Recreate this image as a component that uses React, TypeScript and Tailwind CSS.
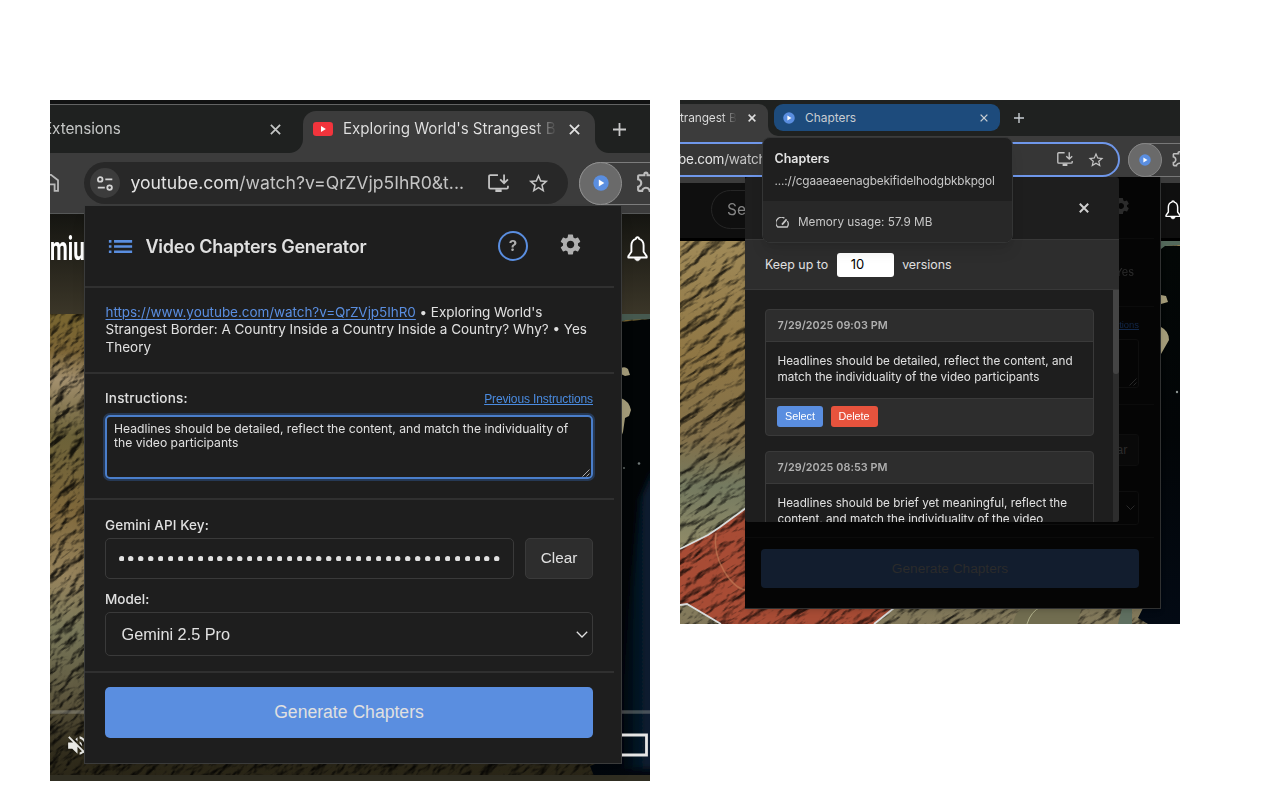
import React from "react";
import {
  MdList,
  MdSettings,
  MdStarBorder,
  MdVolumeOff,
  MdOutlineExtension,
} from "react-icons/md";

const sf = "font-['Inter','Noto_Sans',sans-serif]";
const arial = "font-['Liberation_Sans',Arial,sans-serif]";

const leftTitle = "Exploring World's Strangest B";
const dots = Array.from({ length: 39 }, (_, i) => i);

function Cross({ size, weight = 2 }: { size: number; weight?: number }) {
  return (
    <svg width={size} height={size} viewBox="0 0 10 10" className="shrink-0" fill="none" stroke="currentColor" strokeWidth={weight}>
      <path d="M0.8 0.8 9.2 9.2M9.2 0.8 0.8 9.2" />
    </svg>
  );
}

function Plus({ size }: { size: number }) {
  return (
    <svg width={size} height={size} viewBox="0 0 13 13" className="shrink-0" fill="none" stroke="currentColor" strokeWidth={1.8}>
      <path d="M6.5 0v13M0 6.5h13" />
    </svg>
  );
}

function PlayBadge({ size }: { size: number }) {
  return (
    <svg width={size} height={size} viewBox="0 0 16 16" className="shrink-0">
      <circle cx="8" cy="8" r="7.7" fill="#5a8ee0" />
      <path d="M5.8 4.6v6.8L11.3 8z" fill="#fff" />
    </svg>
  );
}

function Bell({ width }: { width: number }) {
  return (
    <svg width={width} height={(width * 26) / 21} viewBox="0 0 21 26" className="shrink-0" fill="none" stroke="currentColor" strokeWidth={1.9} strokeLinejoin="round">
      <path d="M10.5 1.2c-.9 0-1.5.7-1.5 1.6C6 3.6 4.4 6.2 4.4 9.6v6.2L1.3 20.2v1.3h18.4v-1.3L16.6 15.8V9.6c0-3.400-1.600-6-4.600-6.800 0-.9-.6-1.600-1.500-1.600z" />
      <path d="M7.6 22.3c.3 1.6 1.500 2.500 2.900 2.500s2.600-.9 2.900-2.500z" fill="currentColor" strokeWidth={0.6} />
    </svg>
  );
}

function InstallIcon({ width }: { width: number }) {
  return (
    <svg width={width} height={(width * 18) / 20} viewBox="0 0 20 18" className="shrink-0" fill="none" stroke="currentColor" strokeWidth={1.7}>
      <path d="M9.5 1H2.2Q1 1 1 2.2v10.6Q1 14 2.2 14h15.6q1.2 0 1.2-1.2v-1.6" />
      <path d="M7 16h6" strokeWidth={3} />
      <path d="M15.3 0.4v8M11.6 5.2l3.7 3.6 3.7-3.6" />
    </svg>
  );
}

function TuneIcon() {
  return (
    <svg width="16" height="15" viewBox="0 0 16 15" fill="none" stroke="currentColor" strokeWidth={1.8}>
      <circle cx="3.2" cy="3.4" r="2.3" />
      <path d="M8.3 3.4h7M0.8 11.6h7" />
      <circle cx="12.6" cy="11.6" r="2.3" />
    </svg>
  );
}

function Chevron({ width }: { width: number }) {
  return (
    <svg width={width} height={(width * 7) / 12} viewBox="0 0 12 7" className="shrink-0" fill="none" stroke="currentColor" strokeWidth={1.3}>
      <path d="M0.8 0.8 6 6l5.2-5.2" />
    </svg>
  );
}

function ResizeGrip() {
  return (
    <svg width="8" height="8" viewBox="0 0 8 8" stroke="currentColor" strokeWidth={0.9}>
      <path d="M0.5 7.5 7.5 0.5M4.5 7.5l3-3" />
    </svg>
  );
}

function LeftMap() {
  return (
    <svg width="600" height="467" viewBox="0 0 600 467" className="block">
      <defs>
        <filter id="ridgesA" x="0" y="0" width="100%" height="100%" colorInterpolationFilters="sRGB">
          <feTurbulence type="fractalNoise" baseFrequency="0.05 0.1" numOctaves="5" seed="7" />
          <feColorMatrix values="0 0 0 0 0  0 0 0 0 0  0 0 0 0 0  1 0.6 0 0 -0.2" />
          <feDiffuseLighting surfaceScale="6" diffuseConstant="1.2" lightingColor="#ffffff">
            <feDistantLight azimuth="250" elevation="50" />
          </feDiffuseLighting>
        </filter>
        <linearGradient id="landA" x1="0" y1="0" x2="0" y2="1">
          <stop offset="0" stopColor="#78652f" />
          <stop offset="0.08" stopColor="#7c6536" />
          <stop offset="0.14" stopColor="#a3906e" />
          <stop offset="0.26" stopColor="#6b6138" />
          <stop offset="0.42" stopColor="#7f683b" />
          <stop offset="0.56" stopColor="#96835c" />
          <stop offset="0.68" stopColor="#787759" />
          <stop offset="0.84" stopColor="#59523a" />
          <stop offset="0.92" stopColor="#35301f" />
          <stop offset="1" stopColor="#292516" />
        </linearGradient>
        <linearGradient id="seaA" x1="0" y1="0" x2="0" y2="1">
          <stop offset="0" stopColor="#020506" />
          <stop offset="0.35" stopColor="#020506" />
          <stop offset="0.7" stopColor="#020509" />
          <stop offset="1" stopColor="#02070d" />
        </linearGradient>
        <linearGradient id="glowA" x1="0" y1="0" x2="1" y2="0">
          <stop offset="0" stopColor="#0a2138" stopOpacity="0" />
          <stop offset="1" stopColor="#0a2138" />
        </linearGradient>
        <filter id="softA">
          <feGaussianBlur stdDeviation="3" />
        </filter>
      </defs>
      <rect width="600" height="467" fill="url(#landA)" />
      <g className="mix-blend-multiply" opacity="0.8">
        <rect x="-400" y="-100" width="1000" height="900" transform="rotate(-38)" filter="url(#ridgesA)" />
      </g>
      <path d="M600 5 570 8V440l-30 12 6 15h54z" fill="url(#seaA)" />
      <path d="M590 185l14-30v300h-34v-60z" fill="url(#glowA)" filter="url(#softA)" />
      <path d="M570 0h30v5l-24 1-6 2z" fill="#46594f" />
      <path d="M571 54q4-2 7 1l2 6-5 1-4-2zM571 84q8 3 10 12l-2 6-4 2-2 14-2 5z" fill="#a39b79" />
      <circle cx="589" cy="149.500" r="1.300" fill="#727a78" />
      <circle cx="574" cy="154" r="1" fill="#5c6462" />
      <path d="M0 398h600" stroke="#a3a29c" strokeOpacity="0.4" strokeWidth="3.5" />
      <rect y="461" width="600" height="6" fill="#302e22" />
      <path d="M560 421h36.5v20H560" fill="none" stroke="#e6e6e6" strokeWidth="2.8" />
    </svg>
  );
}

function RightMap() {
  return (
    <svg width="500" height="383" viewBox="0 0 500 383" className="block">
      <defs>
        <filter id="ridgesB" x="0" y="0" width="100%" height="100%" colorInterpolationFilters="sRGB">
          <feTurbulence type="fractalNoise" baseFrequency="0.035 0.09" numOctaves="5" seed="11" />
          <feColorMatrix values="0 0 0 0 0  0 0 0 0 0  0 0 0 0 0  1 0.6 0 0 -0.2" />
          <feDiffuseLighting surfaceScale="6" diffuseConstant="1.25" lightingColor="#ffffff">
            <feDistantLight azimuth="250" elevation="52" />
          </feDiffuseLighting>
        </filter>
        <linearGradient id="landB" x1="0" y1="0" x2="0" y2="1">
          <stop offset="0" stopColor="#a08a58" />
          <stop offset="0.3" stopColor="#8f7644" />
          <stop offset="0.52" stopColor="#82704a" />
          <stop offset="0.64" stopColor="#747a60" />
          <stop offset="0.78" stopColor="#8d8967" />
          <stop offset="1" stopColor="#82785a" />
        </linearGradient>
        <linearGradient id="seaB" x1="0" y1="0" x2="0" y2="1">
          <stop offset="0" stopColor="#030706" />
          <stop offset="0.5" stopColor="#020507" />
          <stop offset="1" stopColor="#030a14" />
        </linearGradient>
      </defs>
      <rect width="500" height="383" fill="url(#landB)" />
      <path d="M0 308 28 294 40 286 66 267H250L213 368 195 383H40L7 363 0 364z" fill="#a84c35" />
      <g className="mix-blend-multiply" opacity="0.75">
        <rect x="-400" y="-100" width="1000" height="800" transform="rotate(-32)" filter="url(#ridgesB)" />
      </g>
      <path d="M0 308 28 294 40 286 66 267M0 364l7-1 34 20M194 383l20-16" fill="none" stroke="#d9dcdc" strokeWidth="1.8" />
      <path d="M36 292q-3 20 8 38t22 19" fill="none" stroke="#c4805a" strokeOpacity="0.6" strokeWidth="1.5" />
      <path d="M480 5h20v378h-32l-10-6 6-12 16-5z" fill="url(#seaB)" />
      <path d="M481 0h19v4l-15 1-4 3z" fill="#53695b" />
      <path d="M481 54l5 1 2 6-7 2zM481 86q8 4 8 13l-4 7-4 7z" fill="#a39b79" />
      <circle cx="497" cy="151" r="1.2" fill="#8b9391" />
      <path d="M333 383q3-16 14-17h55l-5 17" fill="#716d50" />
      <path d="M347 383q4-13 14-17" stroke="#b5b48e" fill="none" />
      <path d="M438 383l4-16h10v16" fill="#5f6f60" />
    </svg>
  );
}

function LeftBrowser() {
  return (
    <section className="relative h-[681px] w-[600px] overflow-hidden bg-[#1f2120]">
      <div className="flex h-[5px] flex-col justify-end bg-[#111212]">
        <div className="h-px bg-[#636464]" />
      </div>
      <div className="flex h-12 bg-[#3c3c3c]">
        <div className={`flex w-[253px] items-center justify-between rounded-br-[14px] bg-[#1f2120] pr-[22px] text-[#c4c6c5] ${sf}`}>
          <span className="-ml-[7px] text-[15.3px] tracking-[-0.1px]">Extensions</span>
          <Cross size={11} weight={1.6} />
        </div>
        <div className="flex w-[292px] bg-[#1f2120] pt-[6px]">
          <div className={`flex w-full items-center rounded-t-[13px] bg-[#3c3c3c] pr-[15px] pb-[6px] pl-[10px] text-[#e2e2e2] ${sf}`}>
            <svg width="20" height="14" viewBox="0 0 20 14" className="shrink-0">
              <rect width="20" height="14" rx="3.2" fill="#f2343c" />
              <path d="M8 4.1v5.8L12.9 7z" fill="#fff" />
            </svg>
            <span className="ml-[10px] w-[212px] bg-gradient-to-r from-[#e2e2e2] from-90% to-[#4a4a4a] bg-clip-text text-[15.2px] tracking-[-0.05px] whitespace-nowrap text-transparent">
              {leftTitle}
            </span>
            <div className="ml-auto flex">
              <Cross size={11} weight={1.6} />
            </div>
          </div>
        </div>
        <div className="flex flex-1 items-center rounded-bl-[14px] bg-[#1f2120] pl-[18px] text-[#c8c8c8]">
          <Plus size={13} />
        </div>
      </div>
      <div className="flex h-[61px] items-center border-b border-[#565858] bg-[#3c3c3c]">
        <div className="flex w-[34px] shrink-0 text-[#b9b9b9]">
          <svg width="10" height="18" viewBox="0 0 10 18" fill="none" stroke="currentColor" strokeWidth={1.8}>
            <path d="M-1 0.600 1 0.900 8 6.200V16.800H4.600V10.400H-1" />
          </svg>
        </div>
        <div className={`flex h-[42px] w-[484px] shrink-0 items-center rounded-full bg-[#282828] pr-[18px] pl-[6px] text-[#c4c4c4] ${sf}`}>
          <div className="flex size-[30px] shrink-0 items-center justify-center rounded-full bg-[#3c3c3c] text-[#d4d4d4]">
            <TuneIcon />
          </div>
          <span className="ml-[10.5px] text-[17.6px] whitespace-nowrap">
            <span className="text-[#e3e3e3]">youtube.com</span>/watch?v=QrZVjp5IhR0&amp;t...
          </span>
          <div className="ml-auto flex items-center gap-[18px]">
            <InstallIcon width={21} />
            <MdStarBorder size={23} />
          </div>
        </div>
        <div className="ml-[11px] flex h-[43px] w-[90px] shrink-0 items-center rounded-l-full border border-[#7c7c7c]">
          <div className="-ml-px flex size-[43px] shrink-0 items-center justify-center rounded-full border border-[#909090] bg-[#6a6a6a]">
            <PlayBadge size={16} />
          </div>
          <MdOutlineExtension className="-mt-[3px] ml-[13px] shrink-0 text-[#bdbdbd]" size={25} />
        </div>
      </div>
      <div className="flex h-[100px] items-start justify-between bg-gradient-to-b from-[#151511] to-[#3b3628] pt-[15px] text-white">
        <span className="origin-left scale-x-[0.62] font-['Roboto','Open_Sans',sans-serif] text-[33px] leading-[40px] font-bold">mium</span>
        <div className="mt-[7px] mr-[2px] flex"><Bell width={21} /></div>
      </div>
      <LeftMap />
      <MdVolumeOff className="absolute top-[633px] left-[15px] text-[#e9e9e6]" size={25} />
      <LeftPopup />
    </section>
  );
}

function LeftPopup() {
  return (
    <div className={`absolute top-[105px] left-[34px] flex h-[559px] w-[538px] flex-col border border-[#3a3b3b] bg-[#1e1e1e] pr-[7px] text-[#e0e0e0] shadow-lg ${sf}`}>
      <header className="flex h-[82px] shrink-0 items-center border-b-2 border-[#303030] pr-[31px] pl-[20px]">
        <MdList size={31} className="text-[#5a8ee0]" />
        <h1 className="ml-[9.5px] text-[18px] font-semibold tracking-[-0.25px]">Video Chapters Generator</h1>
        <div className="ml-auto flex size-[30px] items-center justify-center rounded-full border-2 border-[#5a8ee0] text-[15px] font-bold text-[#b0b0b0]">?</div>
        <MdSettings size={25} className="-mt-[4px] ml-[30px] text-[#b0b0b0]" />
      </header>
      <div className="flex h-[86px] shrink-0 flex-col border-b-2 border-[#303030] pt-[16px] pl-[20.5px] text-[13.5px] leading-[17.3px] whitespace-nowrap">
        <span className="tracking-[-0.055px]">
          <a className="text-[#5a8ee0] underline underline-offset-2">https://www.youtube.com/watch?v=QrZVjp5IhR0</a>
          {" • Exploring World's"}
        </span>
        <span>Strangest Border: A Country Inside a Country Inside a Country? Why? • Yes</span>
        <span>Theory</span>
      </div>
      <div className="h-[126px] shrink-0 border-b-2 border-[#303030] pt-[15.5px] pr-[21px] pl-[20px]">
        <div className="flex h-[18px] items-center justify-between">
          <span className="text-[13.5px] font-medium tracking-[0.17px]">Instructions:</span>
          <a className={`text-[12px] tracking-[-0.12px] text-[#4a8be0] underline ${arial}`}>Previous Instructions</a>
        </div>
        <div className="relative mt-[7.5px] h-[64px] rounded-[5px] border-2 border-[#4a7ecb] pt-[5px] pl-[7px] text-[12.15px] leading-[14px] whitespace-nowrap ring-2 ring-[#263955]">
          <p>Headlines should be detailed, reflect the content, and match the individuality of</p>
          <p>the video participants</p>
          <div className="absolute right-px bottom-0 text-[#bbb]"><ResizeGrip /></div>
        </div>
      </div>
      <div className="flex h-[173px] shrink-0 flex-col border-b-2 border-[#303030] pt-[16px] pr-[21px] pl-[20px]">
        <span className="h-[18px] text-[13.5px] leading-[18px] font-medium tracking-[0.1px]">Gemini API Key:</span>
        <div className="mt-[4px] flex h-[41px] gap-[11px]">
          <div className="flex w-[409px] items-center justify-between rounded-[5px] border border-[#3a3a3a] pr-[13px] pl-[12.5px]">
            {dots.map((i) => (
              <svg key={i} width="5.4" height="5.4" viewBox="0 0 10 10">
                <circle cx="5" cy="5" r="5" fill="#e0e0e0" />
              </svg>
            ))}
          </div>
          <button className={`flex-1 rounded-[5px] border border-[#3a3a3a] bg-[#2d2d2d] text-[15.3px] ${arial}`}>Clear</button>
        </div>
        <span className="mt-[11px] h-[18px] text-[13.5px] leading-[18px] font-medium">Model:</span>
        <div className={`mt-[4px] flex h-[44px] items-center justify-between rounded-[5px] border border-[#3a3a3a] pr-[4px] pl-[15.5px] text-[16.3px] ${arial}`}>
          Gemini 2.5 Pro
          <Chevron width={12} />
        </div>
      </div>
      <button className={`mt-[14px] ml-[20px] h-[51px] w-[488px] shrink-0 rounded-[5px] bg-[#5a8ee0] text-[17.6px] ${arial}`}>Generate Chapters</button>
    </div>
  );
}

function VersionCard({ date, lines }: { date: string; lines: string[] }) {
  return (
    <article className="h-[127px] shrink-0 rounded-[4px] border border-[#3a3a3a] bg-[#2d2d2d] text-[#e0e0e0]">
      <div className="flex h-[32px] items-center border-b border-[#3a3a3a] pt-px pl-[12px] text-[10.8px] font-semibold tracking-[0.06px] text-[#b0b0b0]">{date}</div>
      <div className="h-[57px] border-b border-[#3a3a3a] bg-[#1e1e1e] pt-[11px] pl-[12px] text-[11.7px] leading-[16px] whitespace-nowrap">
        {lines.map((l) => (
          <p key={l}>{l}</p>
        ))}
      </div>
      <div className={`flex h-[35px] items-center gap-[7.5px] pl-[11.5px] text-[10.8px] text-white ${arial}`}>
        <button className="h-[21px] w-[46px] rounded-[3px] bg-[#5a8ee0]">Select</button>
        <button className="h-[21px] w-[47px] rounded-[3px] bg-[#e7533d]">Delete</button>
      </div>
    </article>
  );
}

function DimmedPopup() {
  return (
    <div className={`flex h-full flex-col text-[#2b2b2b] ${sf}`}>
      <div className="mr-[6px] flex h-[62px] shrink-0 justify-end border-b border-[#0b0b0b] pt-[19px] pr-[23px]">
        <MdSettings size={20} />
      </div>
      <div className="mr-[6px] flex h-[68px] shrink-0 justify-end border-b border-[#0b0b0b] pt-[25px] pr-[20px] text-[11px]">Yes</div>
      <div className="mr-[6px] flex h-[98px] shrink-0 flex-col border-b border-[#0b0b0b] pt-[11px] pr-[15px] pl-[15px]">
        <a className={`self-end text-[9.4px] leading-[14px] text-[#12284a] underline ${arial}`}>Previous Instructions</a>
        <div className="mt-[7px] flex h-[49px] items-end justify-end rounded-[3px] border border-[#0e0e0e] p-px">
          <ResizeGrip />
        </div>
      </div>
      <div className="mr-[6px] flex h-[133px] shrink-0 flex-col items-end border-b border-[#0b0b0b] pt-[29px] pr-[15px]">
        <div className={`flex h-[32px] w-[53px] items-center justify-center rounded-[3px] border border-[#0e0e0e] bg-[#090909] text-[12.5px] ${arial}`}>Clear</div>
        <div className="mt-[25px] flex h-[34px] w-[120px] items-center justify-end rounded-[3px] border border-[#0e0e0e] pr-[3px]">
          <Chevron width={9} />
        </div>
      </div>
      <div className={`mt-[11px] ml-[16px] flex h-[39px] w-[378px] items-center justify-center rounded-[4px] bg-[#121d2e] pt-px text-[13.7px] ${arial}`}>Generate Chapters</div>
    </div>
  );
}

function VersionsModal() {
  return (
    <div className={`absolute top-0 left-0 flex h-[345px] w-[374px] flex-col overflow-hidden rounded-[3px] bg-[#1e1e1e] text-[#e0e0e0] ${sf}`}>
      <div className="flex h-[62px] shrink-0 items-center justify-end pr-[30px] text-[#cfcfcf]">
        <Cross size={10} weight={2} />
      </div>
      <div className="flex h-[51px] shrink-0 items-center border-y border-[#383838] bg-[#2d2d2d] pt-px pl-[20px] text-[12.4px]">
        <span>Keep up to</span>
        <div className="ml-[8.5px] flex h-[24px] w-[57px] items-center rounded-[3px] bg-white pl-[14px] text-[13px] text-black">10</div>
        <span className="ml-[8.5px]">versions</span>
      </div>
      <div className="flex min-h-0 flex-1">
        <div className="flex w-[368px] flex-col gap-[15px] overflow-hidden pt-[19px] pr-[19.5px] pl-[19.5px]">
          <VersionCard
            date="7/29/2025 09:03 PM"
            lines={["Headlines should be detailed, reflect the content, and", "match the individuality of the video participants"]}
          />
          <VersionCard
            date="7/29/2025 08:53 PM"
            lines={["Headlines should be brief yet meaningful, reflect the", "content, and match the individuality of the video"]}
          />
        </div>
        <div className="w-[6px] bg-[#2d2d2d]">
          <div className="h-[84px] rounded-b-[3px] bg-[#444]" />
        </div>
      </div>
    </div>
  );
}

function TabTooltip() {
  return (
    <div className={`absolute top-[37px] left-[82px] h-[106px] w-[251px] overflow-hidden rounded-[8px] border border-[#343535] bg-[#1f1f1f] shadow-lg ${sf}`}>
      <div className="h-[63px] pt-[12px] pl-[11.5px] whitespace-nowrap">
        <div className="text-[12.5px] leading-[18px] font-semibold tracking-[-0.05px] text-[#e3e3e3]">Chapters</div>
        <div className="mt-[4px] text-[11.8px] leading-[18px] tracking-[-0.14px] text-[#c7c7c7]">...://cgaaeaeenagbekifidelhodgbkbkpgol</div>
      </div>
      <div className="flex h-[42px] items-center gap-[9px] bg-[#282828] pl-[13px] text-[11.75px] text-[#c7c7c7]">
        <svg width="13" height="11" viewBox="0 0 13 11" fill="none" stroke="currentColor" strokeWidth={1.3}>
          <path d="M8.4 1.1A5.6 5.6 0 0 0 1.7 10h9.6A5.6 5.6 0 0 0 11.4 4" />
          <path d="M6 7.6 10.6 2.4" strokeWidth={1.8} />
        </svg>
        <span className="pt-px">Memory usage: 57.9 MB</span>
      </div>
    </div>
  );
}

function RightBrowser() {
  return (
    <section className="relative h-[524px] w-[500px] overflow-hidden bg-[#1f2120]">
      <div className={`flex h-[36px] bg-[#3c3c3c] text-[11.9px] ${sf}`}>
        <div className="w-[88px] bg-[#1f2120] pt-[4px]">
          <div className="flex h-full items-center rounded-tr-[9px] bg-[#3c3c3c] pb-[5px] text-[#dedede]">
            <span className="w-[56px] bg-gradient-to-r from-[#dedede] from-75% to-[#444] bg-clip-text tracking-[-0.1px] whitespace-nowrap text-transparent">trangest B</span>
            <div className="ml-[12px] flex"><Cross size={8} weight={1.9} /></div>
          </div>
        </div>
        <div className="flex flex-1 rounded-bl-[10px] bg-[#1f2120] pt-[4px] pl-[5.5px] text-[#c8cdd2]">
          <div className="flex h-[27px] w-[226px] items-center rounded-[9px] bg-[#1d4b7c] pr-[12px] pl-[9.5px]">
            <PlayBadge size={12} />
            <span className="ml-[10px]">Chapters</span>
            <div className="ml-auto flex"><Cross size={8} weight={1.7} /></div>
          </div>
          <div className="mt-[8px] ml-[14px] flex h-[11px] items-center"><Plus size={10} /></div>
        </div>
      </div>
      <div className="flex h-[47px] items-center bg-[#3c3c3c]">
        <div className={`flex h-[35px] w-[440px] shrink-0 items-center justify-between rounded-r-full border-y-2 border-r-2 border-[#6f97ea] bg-[#363636] pr-[13px] text-[#c4c4c4] ${sf}`}>
          <span className="-ml-[2px] text-[13.5px] tracking-[-0.25px] whitespace-nowrap"><span className="text-[#e3e3e3]">be.com</span>/watch</span>
          <div className="flex items-center gap-[14px]">
            <InstallIcon width={16} />
            <MdStarBorder size={18} />
          </div>
        </div>
        <div className="ml-[8px] flex h-[34px] w-[80px] shrink-0 items-center rounded-l-full border border-[#777]">
          <div className="-ml-px flex size-[34px] shrink-0 items-center justify-center rounded-full border border-[#858585] bg-[#6a6a6a]">
            <PlayBadge size={12} />
          </div>
          <MdOutlineExtension className="-mt-[2px] ml-[9px] shrink-0 text-[#bdbdbd]" size={19} />
        </div>
      </div>
      <div className="flex h-[58px] items-start justify-between border-b-[3px] border-black bg-[#0f0f0f] pt-[7px] text-white">
        <div className={`ml-[31px] flex h-[39px] w-[120px] items-center rounded-full border border-[#262626] pl-[15px] text-[15.5px] text-[#858585] ${sf}`}>Search</div>
        <div className="-mr-px mt-[10px] flex"><Bell width={16} /></div>
      </div>
      <RightMap />
      <div className="absolute top-[77px] left-[65px] h-[432px] w-[416px] border-r border-b border-[#303131] bg-[#050505] shadow-md">
        <DimmedPopup />
        <VersionsModal />
      </div>
      <TabTooltip />
    </section>
  );
}

export default function App() {
  return (
    <main className="flex h-[800px] w-[1280px] items-start gap-[30px] overflow-hidden bg-white pt-[100px] pl-[50px]">
      <LeftBrowser />
      <RightBrowser />
    </main>
  );
}
